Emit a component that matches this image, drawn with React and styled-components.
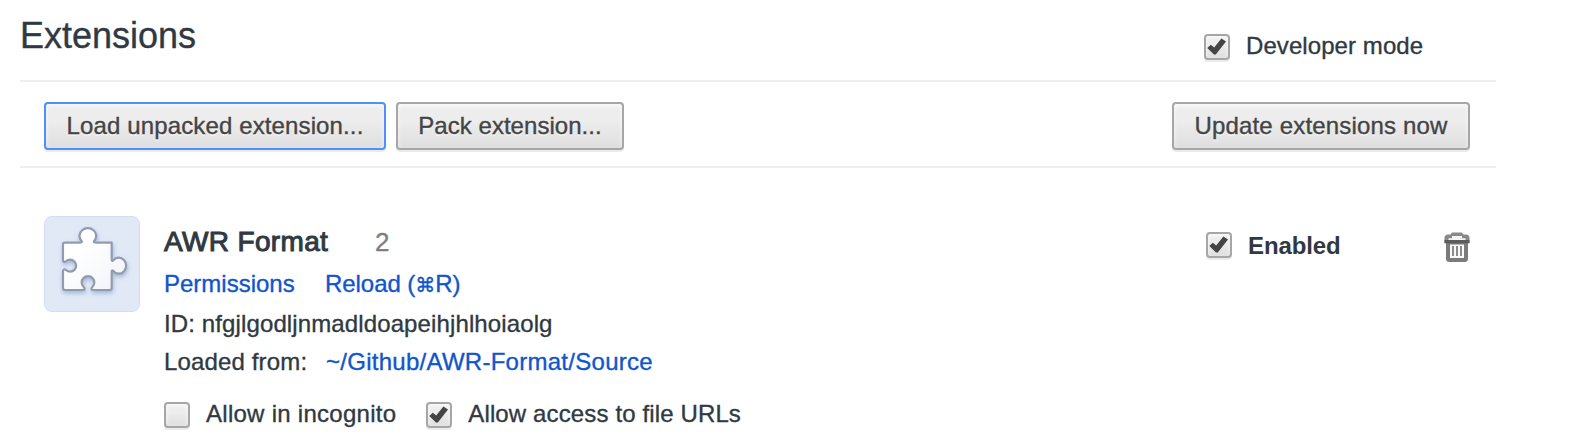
import React from "react";
import styled, { createGlobalStyle } from "styled-components";

const GlobalStyle = createGlobalStyle`
  body {
    margin: 0;
    background: #fff;
    color: #303942;
    font: 24px/28px "Liberation Sans", "DejaVu Sans", sans-serif;
    -webkit-text-stroke: 0.35px currentColor;
    overflow: hidden;
  }
`;

const Page = styled.main`
  width: 1476px;
  height: 446px;
  margin-left: 20px;
`;

const Header = styled.header`
  display: flex;
  justify-content: space-between;
  box-sizing: border-box;
  height: 82px;
  padding-top: 15px;
  border-bottom: 2px solid #eee;
`;

const Title = styled.h1`
  margin: 0;
  font-size: 36px;
  font-weight: 400;
  line-height: 41px;
  letter-spacing: -0.02px;
`;

const DeveloperMode = styled.div`
  width: 292px;
  padding-top: 17px;
`;

const Toolbar = styled.div`
  display: flex;
  gap: 10px;
  padding: 20px 26px 16px 24px;
  border-bottom: 2px solid #eee;
`;

const Button = styled.button`
  box-sizing: border-box;
  width: ${(p) => p.$width}px;
  height: 48px;
  margin: 0 0 0 ${(p) => (p.$end ? "auto" : "0")};
  padding: 0;
  border: 2px solid ${(p) => (p.$focused ? "#4d90fe" : "#a6a6a6")};
  border-radius: 4px;
  background: linear-gradient(#ededed, #ededed 38%, #dedede);
  box-shadow: 0 2px 0 rgba(0, 0, 0, 0.08), inset 0 2px 4px rgba(255, 255, 255, 0.75);
  color: #444;
  font: inherit;
  letter-spacing: ${(p) => p.$spacing}px;
  text-shadow: 0 2px 0 #f0f0f0;
  white-space: nowrap;
`;

const Extension = styled.section`
  display: flex;
  padding: 48px 26px 0 24px;
`;

const IconTile = styled.div`
  box-sizing: border-box;
  width: 96px;
  height: 96px;
  margin-right: 24px;
  border: 1px solid #d3dff0;
  border-radius: 8px;
  background: #e1e9f7;
  svg {
    display: block;
    margin: -1px;
  }
`;

const Details = styled.div`
  flex: 1;
  padding-top: 10px;
`;

const NameRow = styled.div`
  display: flex;
  align-items: baseline;
  height: 44px;
  line-height: 32px;
`;

const Name = styled.h2`
  width: 211px;
  margin: 0;
  font-size: 28px;
  font-weight: 400;
  line-height: 32px;
  letter-spacing: 0.35px;
  -webkit-text-stroke: 1px currentColor;
`;

const Version = styled.span`
  color: #808080;
  font-size: 26px;
`;

const Line = styled.div`
  display: flex;
  height: ${(p) => p.$height}px;
  letter-spacing: ${(p) => p.$spacing || 0}px;
  white-space: nowrap;
`;

const Lead = styled.span`
  width: 162px;
`;

const Link = styled.a`
  color: #15c;
  letter-spacing: ${(p) => p.$spacing || 0}px;
  text-decoration: none;
`;

const LinkCell = styled(Link)`
  width: 161px;
`;

const CommandKey = styled.span`
  font-size: 20px;
  line-height: 1;
`;

const Options = styled.div`
  display: flex;
  gap: 30px;
`;

const CheckLabel = styled.label`
  display: flex;
  align-items: flex-start;
  gap: 16px;
  font-weight: ${(p) => (p.$bold ? 700 : 400)};
  -webkit-text-stroke-width: ${(p) => (p.$bold ? 0 : 0.35)}px;
  letter-spacing: ${(p) => p.$spacing || 0}px;
  white-space: nowrap;
`;

const Box = styled.span`
  box-sizing: border-box;
  flex: none;
  width: 26px;
  height: 26px;
  margin-top: ${(p) => p.$drop}px;
  border: 2px solid #a6a6a6;
  border-radius: 4px;
  background: linear-gradient(#ededed, #ededed 38%, #dedede);
  box-shadow: 0 2px 0 rgba(0, 0, 0, 0.08), inset 0 2px 4px rgba(255, 255, 255, 0.75);
  svg {
    display: block;
    margin: -2px;
  }
`;

const Controls = styled.div`
  display: flex;
  justify-content: space-between;
  align-items: flex-start;
  width: 264px;
  padding-top: 16px;
`;

function Check({ label, checked, drop = 2, ...rest }) {
  return (
    <CheckLabel {...rest}>
      <Box $drop={drop}>
        {checked && (
          <svg width="26" height="26" viewBox="0 0 26 26">
            <path d="M3.3 14L6.8 10.7L10.2 13.6L17.4 4.4L22 7.6L11.8 20.4L10 20.6Z" fill="#444" />
          </svg>
        )}
      </Box>
      <span>{label}</span>
    </CheckLabel>
  );
}

function Puzzle() {
  return (
    <svg width="96" height="96" viewBox="0 0 288 288">
      <defs>
        <linearGradient id="piece" x1="0" y1="0" x2="1" y2="1">
          <stop offset="0.3" stopColor="#fff" />
          <stop offset="1" stopColor="#f1f3f8" />
        </linearGradient>
        <filter id="shade" x="-20%" y="-20%" width="140%" height="150%">
          <feDropShadow dx="2" dy="7" stdDeviation="6" floodColor="#6f8cc0" floodOpacity="0.55" />
        </filter>
      </defs>
      <path
        d="M62 80H106Q117 80 112 74A25 23 0 1 1 151 74Q146 80 158 80H203V130Q203 138 208 133A22 24 0 1 1 208 165Q203 160 203 168V216Q203 222 197 222H147Q139 222 145 213A19 19 0 1 0 119 213Q125 222 117 222H64Q57 222 57 216V167Q57 157 66 162A18 18 0 1 0 66 136Q57 141 57 131V85Q57 80 62 80Z"
        fill="url(#piece)"
        stroke="#929bac"
        strokeWidth="6.5"
        strokeLinejoin="round"
        filter="url(#shade)"
      />
    </svg>
  );
}

function Trash() {
  return (
    <svg width="26" height="30" viewBox="0 0 26 30">
      <path d="M2 9H24V26.5Q24 30 20.5 30H5.5Q2 30 2 26.5Z" fill="#7b7b7b" />
      <path d="M6 12.5H20V26H6Z" fill="#fafafa" />
      <path d="M9 14V24M13 14V24M17 14V24" stroke="#8c8c8c" strokeWidth="2" />
      <path d="M0.5 11V6Q0.5 2.5 4 2.5H6.5L8 0.5H18L19.5 2.5H22Q25.5 2.5 25.5 6V11Z" fill="#898989" />
      <path d="M4.5 8V6.2H8V4H18V6.2H21.5V8Z" fill="#f4f4f4" />
      <path d="M0.5 8H25.5V11.3H0.5Z" fill="#5c5c5c" />
    </svg>
  );
}

export default function App() {
  return (
    <>
      <GlobalStyle />
      <Page>
        <Header>
          <Title>Extensions</Title>
          <DeveloperMode>
            <Check label="Developer mode" checked $spacing={0.08} />
          </DeveloperMode>
        </Header>
        <Toolbar>
          <Button $width={342} $spacing={0.13} $focused>Load unpacked extension...</Button>
          <Button $width={228} $spacing={0.04}>Pack extension...</Button>
          <Button $width={298} $spacing={0.17} $end>Update extensions now</Button>
        </Toolbar>
        <Extension>
          <IconTile>
            <Puzzle />
          </IconTile>
          <Details>
            <NameRow>
              <Name>AWR Format</Name>
              <Version>2</Version>
            </NameRow>
            <Line $height={40}>
              <LinkCell>Permissions</LinkCell>
              <Link $spacing={-0.05}>
                Reload (<CommandKey>⌘</CommandKey>R)
              </Link>
            </Line>
            <Line $height={38} $spacing={0.12}>ID: nfgjlgodljnmadldoapeihjhlhoiaolg</Line>
            <Line $height={52} $spacing={0.15}>
              <Lead>Loaded from:</Lead>
              <Link $spacing={0.27}>~/Github/AWR-Format/Source</Link>
            </Line>
            <Options>
              <Check label="Allow in incognito" checked={false} $spacing={0.27} />
              <Check label="Allow access to file URLs" checked $spacing={0.13} />
            </Options>
          </Details>
          <Controls>
            <Check label="Enabled" checked drop={0} $bold $spacing={-0.1} />
            <Trash />
          </Controls>
        </Extension>
      </Page>
    </>
  );
}
